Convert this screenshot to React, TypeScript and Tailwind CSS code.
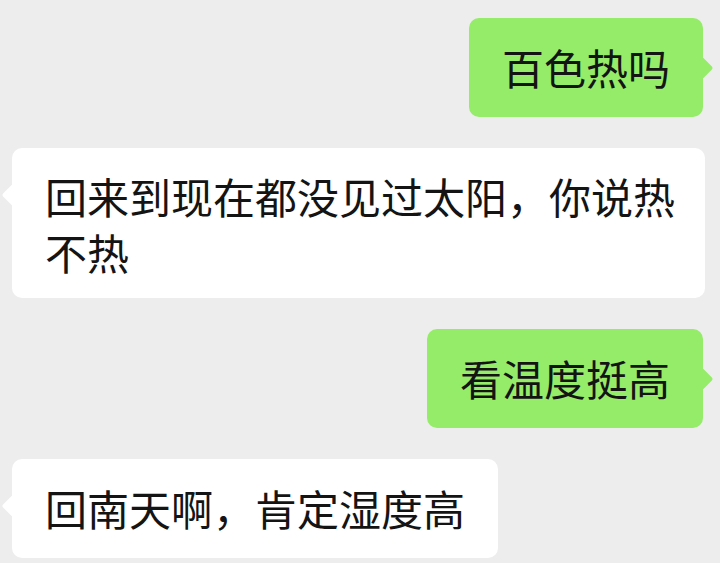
import React from "react";

const font = { fontFamily: '"Noto Sans CJK SC", "Noto Sans", sans-serif' };

function Right({ children }: { children: React.ReactNode }) {
  return (
    <div className="flex justify-end pr-[17px]">
      <div className="relative rounded-[10px] bg-[#95ec69] px-[33px] pt-[21px] pb-[22px] text-[42px] leading-[56px] text-[#141414]">
        <div className="absolute right-[-7px] top-[42px] h-[16px] w-[16px] rotate-45 rounded-[2px] bg-[#95ec69]" />
        <span className="relative">{children}</span>
      </div>
    </div>
  );
}

function Left({ children, cls }: { children: React.ReactNode; cls: string }) {
  return (
    <div className="flex justify-start pl-[12px]">
      <div className={`relative rounded-[10px] bg-white px-[33px] text-[42px] leading-[56px] text-[#141414] ${cls}`}>
        <div className="absolute left-[-7px] top-[39px] h-[16px] w-[16px] rotate-45 rounded-[2px] bg-white" />
        <span className="relative">{children}</span>
      </div>
    </div>
  );
}

export default function App() {
  return (
    <div className="h-[563px] w-[720px] overflow-hidden bg-[#ededed] pt-[18px]" style={font}>
      <div className="flex flex-col gap-[31px]">
        <Right>百色热吗</Right>
        <Left cls="w-[693px] pt-[20px] pb-[18px]">
          <span className="whitespace-nowrap">回来到现在都没见过太阳，你说热</span>
          <br />
          不热
        </Left>
        <Right>看温度挺高</Right>
        <Left cls="pt-[21px] pb-[22px]">回南天啊，肯定湿度高</Left>
      </div>
    </div>
  );
}
